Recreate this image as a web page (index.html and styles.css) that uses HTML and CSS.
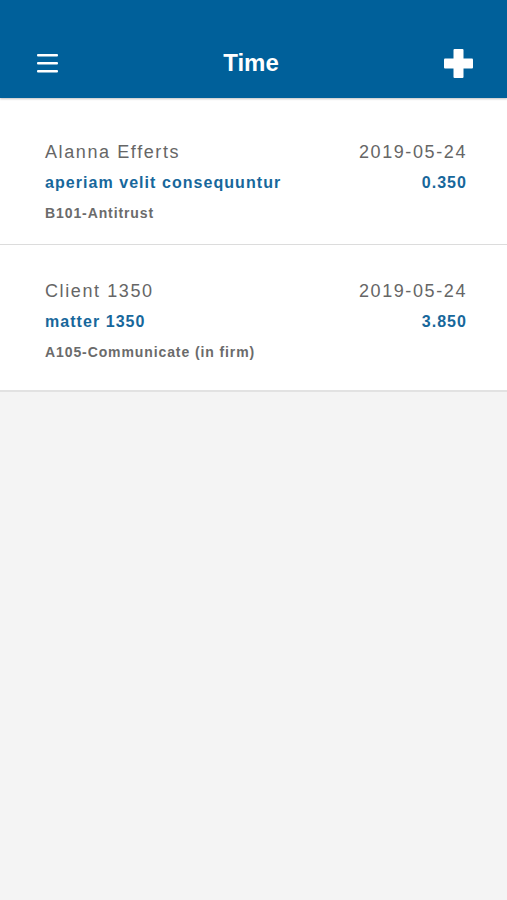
FILE: index.html
```html
<!DOCTYPE html>
<html lang="en">
  <head>
    <meta charset="UTF-8" />
    <meta name="viewport" content="width=device-width, initial-scale=1.0" />
    <title>Time</title>
    <link rel="stylesheet" href="styles.css">
  </head>
  <body>
    <header class="topbar">
      <button class="icon-btn menu-btn" aria-label="Menu">
        <svg width="21" height="19" viewBox="0 0 21 19">
          <rect x="0" y="0" width="21" height="2.6" rx="1" fill="#fff" />
          <rect x="0" y="8" width="21" height="2.6" rx="1" fill="#fff" />
          <rect x="0" y="16" width="21" height="2.6" rx="1" fill="#fff" />
        </svg>
      </button>
      <h1 class="title">Time</h1>
      <button class="icon-btn add-btn" aria-label="Add">
        <svg width="29" height="29" viewBox="0 0 29 29">
          <rect x="9.5" y="0" width="10" height="29" rx="1" fill="#fff" />
          <rect x="0" y="9.5" width="29" height="10" rx="1" fill="#fff" />
        </svg>
      </button>
    </header>

    <ul class="entries">
      <li class="entry">
        <div class="row">
          <span class="client">Alanna Efferts</span>
          <span class="date">2019-05-24</span>
        </div>
        <div class="row">
          <span class="matter">aperiam velit consequuntur</span>
          <span class="hours">0.350</span>
        </div>
        <div class="row">
          <span class="task">B101-Antitrust</span>
        </div>
      </li>
      <li class="entry">
        <div class="row">
          <span class="client">Client 1350</span>
          <span class="date">2019-05-24</span>
        </div>
        <div class="row">
          <span class="matter">matter 1350</span>
          <span class="hours">3.850</span>
        </div>
        <div class="row">
          <span class="task">A105-Communicate (in firm)</span>
        </div>
      </li>
    </ul>
  </body>
</html>
```

FILE: styles.css
```css
body {
  margin: 0;
  min-height: 100vh;
  background-color: #f4f4f4;
  font-family: "Liberation Sans", Arial, sans-serif;
}

.topbar {
  display: flex;
  align-items: center;
  justify-content: space-between;
  height: 70px;
  padding: 28px 34px 0 37px;
  background-color: #00609a;
  box-shadow: 0 1px 2px rgba(0, 0, 0, 0.25);
  position: relative;
  z-index: 1;
}

.title {
  margin: 0;
  color: #fff;
  font-size: 24px;
  font-weight: bold;
}

.icon-btn {
  display: flex;
  padding: 0;
  border: none;
  background: none;
}

.entries {
  list-style: none;
  margin: 0;
  padding: 8px 0 7px;
  background-color: #fff;
  border-bottom: 2px solid #e2e2e2;
}

.entry {
  height: 91px;
  padding: 31px 40px 16px 45px;
}

.entry + .entry {
  border-top: 1px solid #dcdcdc;
}

.row {
  display: flex;
  justify-content: space-between;
  height: 30px;
  line-height: 30px;
}

.row:first-child {
  height: 31px;
}

.client,
.date {
  color: #666;
  font-size: 18px;
  letter-spacing: 1.6px;
}

.matter,
.hours {
  color: #17679b;
  font-size: 16px;
  font-weight: bold;
  letter-spacing: 1.05px;
}

.task {
  color: #6b6b6b;
  font-size: 14px;
  font-weight: bold;
  letter-spacing: 0.9px;
}
```
